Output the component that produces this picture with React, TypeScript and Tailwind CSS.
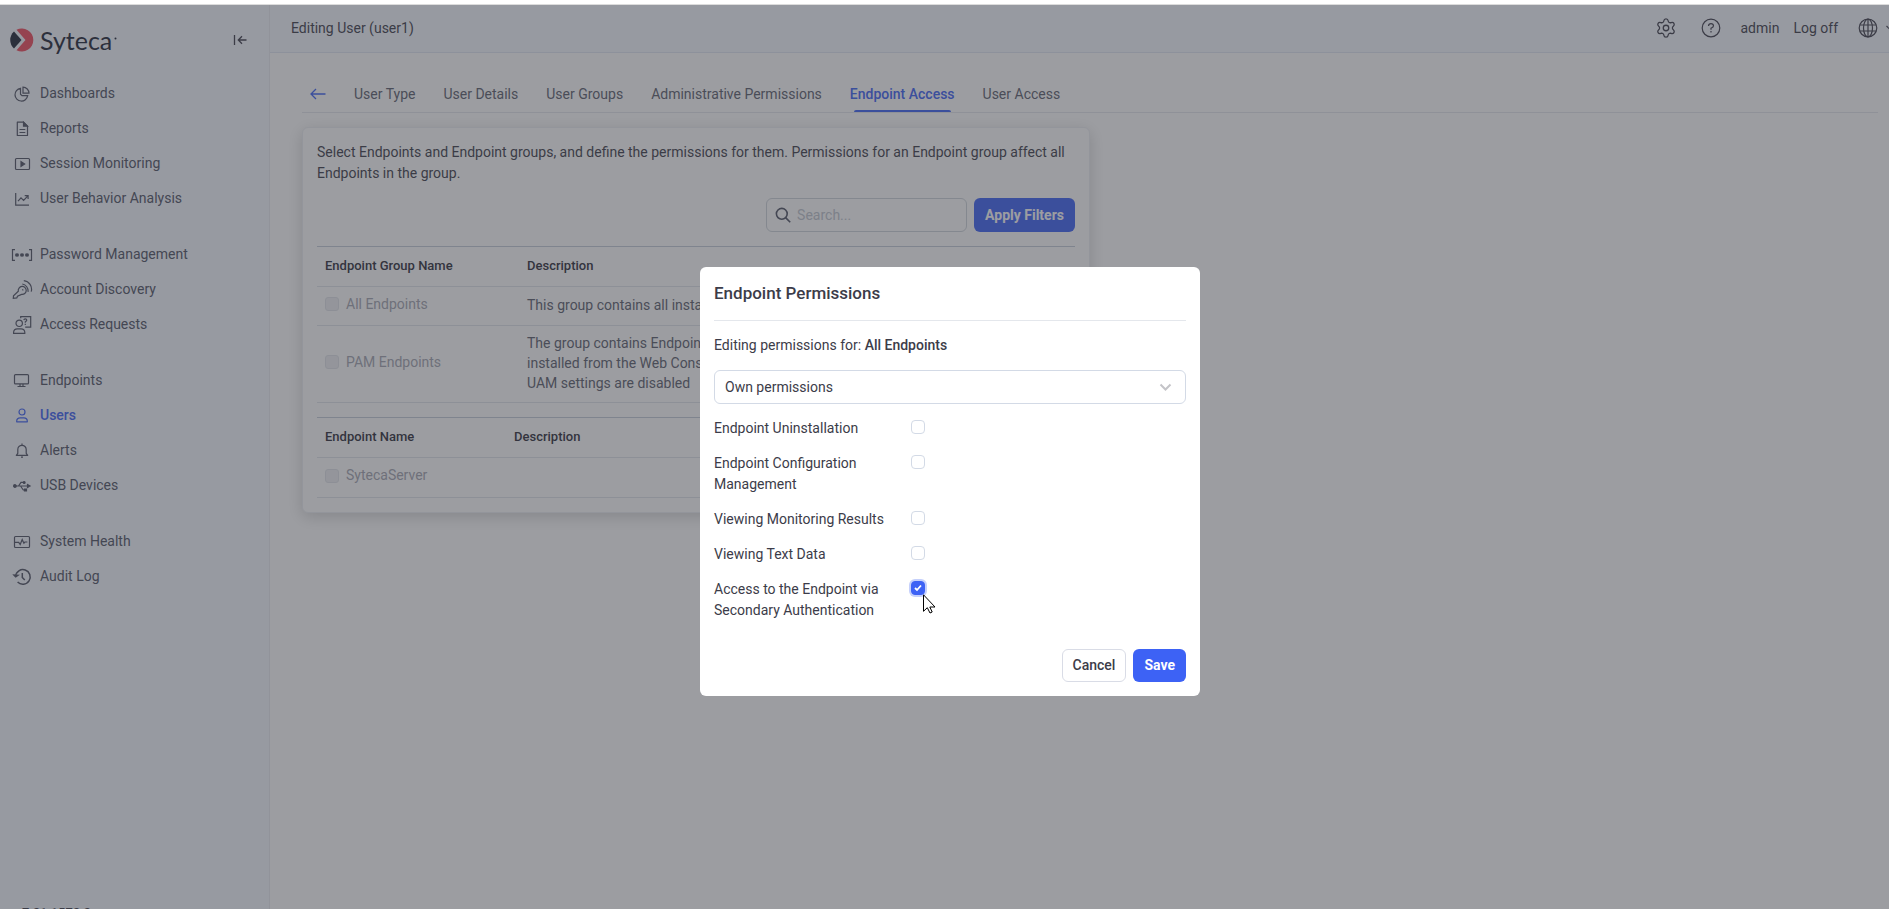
import type { ReactNode } from "react";
import { clsx } from "clsx";
import { Settings } from "lucide-react";

type NavItem = { label: string; icon: ReactNode; active?: boolean };

const navGroups: NavItem[][] = [
  [
    {
      label: "Dashboards",
      icon: (
        <>
          <path d="M9.500 5.300A6.400 6.400 0 1 0 16.700 12.700H11L9.500 11.200z" />
          <path d="M12 4.200v6h6a6 6 0 0 0-6-6z" />
        </>
      ),
    },
    {
      label: "Reports",
      icon: (
        <>
          <path d="M6.300 4.200h6.200l4 4v9.300H6.300z" strokeLinejoin="round" />
          <path d="M12.500 4.200v4h4z" fill="currentColor" />
          <path d="M8.500 11.500h5.800M8.500 14.500h5.800" />
        </>
      ),
    },
    {
      label: "Session Monitoring",
      icon: (
        <>
          <rect x="4.500" y="5.500" width="14" height="11" rx="1" />
          <path d="M10 8.700v4.600l3.600-2.300z" fill="currentColor" />
        </>
      ),
    },
    {
      label: "User Behavior Analysis",
      icon: (
        <>
          <path d="M4.700 5v12.200H18" />
          <path d="M7 13.200l3-3.400 2.600 2.600 4.300-4.600M13.700 7.600h3.400v3.400" />
        </>
      ),
    },
  ],
  [
    {
      label: "Password Management",
      icon: (
        <>
          <path d="M4 5.700H1.500v10.600H4M18 5.700h2.500v10.600H18" />
          <path d="M6 9v4M4.200 10l3.600 2M7.800 10l-3.600 2M11 9v4M9.200 10l3.600 2M12.800 10l-3.600 2M16 9v4M14.200 10l3.600 2M17.800 10l-3.600 2" />
        </>
      ),
    },
    {
      label: "Account Discovery",
      icon: (
        <>
          <path d="M7.300 12.200A4 4 0 1 1 10.600 15.400L6.500 17.200 5.800 18.900 2.300 19.400 2.500 16.700z" />
          <path d="M11.300 10.300l1 1M11.300 5a7 7 0 0 1 5.700 7.800M12.800 1.700a8.600 8.600 0 0 1 7.400 11" />
        </>
      ),
    },
    {
      label: "Access Requests",
      icon: (
        <>
          <circle cx="8.200" cy="9.300" r="3.200" />
          <path d="M2.600 19.300v-1a3.700 3.700 0 0 1 3.700-3.400h3.800a3.700 3.700 0 0 1 3.700 3.400v1z" />
          <path d="M9.700 4.300V2.700h10v10.500h-5.500" />
          <path d="M12.800 6.200q.2-1.300 1.500-1.300t1.500 1.200q0 .9-1.500 1.700v1M14.300 9.800v1.100" />
        </>
      ),
    },
  ],
  [
    {
      label: "Endpoints",
      icon: (
        <>
          <rect x="3.500" y="4.600" width="14" height="9.300" rx="1" />
          <path d="M9 14v2.500M12 14v2.500M6.500 16.500h8" />
        </>
      ),
    },
    {
      label: "Users",
      active: true,
      icon: (
        <>
          <circle cx="11" cy="7" r="3" />
          <path
            d="M5.700 16.800v-.8a3.400 3.400 0 0 1 3.400-3.200h3.800a3.400 3.400 0 0 1 3.400 3.200v.8z"
            strokeLinejoin="round"
          />
        </>
      ),
    },
    {
      label: "Alerts",
      icon: (
        <>
          <path
            d="M11 3.600v1.200M5.300 15.300h11.400l-1.500-2V9.500a4.200 4.200 0 0 0-8.400 0v3.800z"
            strokeLinejoin="round"
          />
          <path d="M10 17.200h2" />
        </>
      ),
    },
    {
      label: "USB Devices",
      icon: (
        <>
          <path d="M3.500 11H18M7.500 11l2.500-3.600h3M9.500 11l2.800 4h2" />
          <circle cx="3.900" cy="11" r="1.300" fill="currentColor" />
          <circle cx="13.200" cy="7.400" r=".9" fill="currentColor" />
          <path d="M13.500 14h2v2h-2zM16.500 9.600v2.800l2.500-1.400z" fill="currentColor" />
        </>
      ),
    },
  ],
  [
    {
      label: "System Health",
      icon: (
        <>
          <rect x="3.500" y="5.500" width="15" height="11" rx="1" />
          <path d="M4 11.300h3.700l1.500 2.200 2-5 1.700 3.700 1-1.200h2.500" />
        </>
      ),
    },
    {
      label: "Audit Log",
      icon: (
        <>
          <path d="M4.600 10.300a7.300 7.300 0 1 1 2 5.700" strokeWidth="1.500" />
          <path d="M2.800 9l1.900 2 2.500-1.800z" fill="currentColor" />
          <path d="M11.300 7v4.500l2.500 2.600" strokeWidth="1.500" />
        </>
      ),
    },
  ],
];

const tabs = [
  "User Type",
  "User Details",
  "User Groups",
  "Administrative Permissions",
  "Endpoint Access",
  "User Access",
];

const permissions = [
  { id: "uninstall", label: "Endpoint Uninstallation" },
  { id: "config", label: "Endpoint Configuration Management" },
  { id: "results", label: "Viewing Monitoring Results" },
  { id: "text", label: "Viewing Text Data" },
  {
    id: "secondary",
    label: "Access to the Endpoint via Secondary Authentication",
    checked: true,
  },
];

function Logo() {
  return (
    <a href="#" aria-label="Syteca" className="flex items-center gap-1.5 text-[#1c2434]">
      <svg width="24" height="24" viewBox="0 0 24 24">
        <path d="M4 3.500L11.500 12 4 20.500A11.500 11.500 0 0 1 4 3.500z" fill="currentColor" />
        <path d="M6.500 1.800A11.500 11.500 0 1 1 6.500 22.200L15.500 12z" fill="#f04a5c" />
      </svg>
      <span className="font-[Lato] text-[25px] leading-8">Syteca</span>
      <svg width="3" height="3" viewBox="0 0 3 3" className="-ml-1 mb-1">
        <circle cx="1.500" cy="1.500" r="1" fill="currentColor" />
      </svg>
    </a>
  );
}

function Sidebar() {
  return (
    <aside className="flex w-[270px] shrink-0 flex-col border-r border-[#e8eaf0] bg-[#f5f8ff]">
      <div className="flex items-center justify-between pt-[19px] pr-[22px] pl-2.5">
        <Logo />
        <button aria-label="Collapse menu" className="text-[#3c3c49]">
          <svg width="14" height="12" viewBox="0 0 14 12" fill="none" stroke="currentColor" strokeWidth="1.300">
            <path d="M1.500 1v10M13.500 6H5.500M9 2.300L5.300 6 9 9.700" />
          </svg>
        </button>
      </div>
      <nav className="flex flex-col gap-[21px] pt-5 pl-[11px]">
        {navGroups.map((group, i) => (
          <ul key={i}>
            {group.map((item) => (
              <li key={item.label}>
                <a
                  href="#"
                  className={clsx(
                    "flex h-[35px] items-center gap-[7px]",
                    item.active ? "font-medium text-[#3d62f5]" : "text-[#4e5263]"
                  )}
                >
                  <svg width="22" height="22" viewBox="0 0 22 22" fill="none" stroke="currentColor" strokeWidth="1.200">
                    {item.icon}
                  </svg>
                  {item.label}
                </a>
              </li>
            ))}
          </ul>
        ))}
      </nav>
      {/* version number, runs past the bottom edge */}
      <div className="mt-auto h-[3px] pl-[22px] text-[13px] leading-[13px] text-[#3c3c49]">
        7.21.1572.2
      </div>
    </aside>
  );
}

function Header() {
  return (
    <header className="flex h-12 shrink-0 items-center justify-between border-b border-[#e1e6f2] bg-[#f5f8ff] pl-[21px] text-[#3c3c49]">
      <h1>Editing User (user1)</h1>
      <div className="flex items-center">
        <button aria-label="Settings" className="mr-6 pb-0.5">
          <Settings size={22} strokeWidth={1.4} />
        </button>
        <button aria-label="Help" className="mr-[19px] pb-0.5">
          <svg width="20" height="20" viewBox="0 0 20 20" fill="none" stroke="currentColor" strokeWidth="1.200">
            <circle cx="10" cy="10" r="8.800" />
            <path d="M7.500 8Q7.700 5.700 10 5.700T12.500 7.800Q12.500 9.200 10 10.200V11.700M10 13v1.500" />
          </svg>
        </button>
        <a href="#" className="mr-3.5">
          admin
        </a>
        <a href="#" className="mr-5">
          Log off
        </a>
        <button aria-label="Language" className="flex items-center gap-2 pb-0.5">
          <svg width="20" height="20" viewBox="0 0 20 20" fill="none" stroke="currentColor" strokeWidth="1.200">
            <circle cx="10" cy="10" r="8.800" />
            <ellipse cx="10" cy="10" rx="4.500" ry="8.800" />
            <path d="M10 1v18M2 7h16M2 13h16" />
          </svg>
          <svg width="3" height="6" viewBox="0 0 3 6" fill="none" stroke="currentColor" strokeWidth="1.200">
            <path d="M.5 1l4 4" />
          </svg>
        </button>
      </div>
    </header>
  );
}

function Tabs() {
  return (
    <div className="flex items-center border-b border-[#e4e7ec] pl-2 text-[#5b5e6d]">
      <a href="#" aria-label="Back" className="mr-7 pb-2 text-[#3d62f5]">
        <svg className="block" width="16" height="12" viewBox="0 0 16 12" fill="none" stroke="currentColor" strokeWidth="1.300">
          <path d="M15.500 6H1M6 1L1 6l5 5" />
        </svg>
      </a>
      <nav className="flex gap-7">
        {tabs.map((tab) => {
          const active = tab === "Endpoint Access";
          return (
            <a
              key={tab}
              href="#"
              className={clsx("flex flex-col", active && "font-medium text-[#3d62f5]")}
            >
              <span className="pb-[5px]">{tab}</span>
              <span className={clsx("mx-1 h-0.5 rounded-t", active && "bg-[#3d62f5]")} />
            </a>
          );
        })}
      </nav>
    </div>
  );
}

function DisabledOption({ label }: { label: string }) {
  return (
    <label className="flex items-center gap-[7px] pb-0.5 text-[#a3a5b0]">
      <input
        type="checkbox"
        disabled
        className="size-3.5 appearance-none rounded-[3px] border border-[#e1e3e8] bg-[#eeeff2]"
      />
      {label}
    </label>
  );
}

function EndpointPanel() {
  return (
    <section className="mt-3.5 w-[788px] rounded-md border border-[#eceef2] bg-white p-3.5 shadow-[0_4px_16px_rgba(0,0,0,0.18)]">
      <p className="leading-[21px] text-[#3c3c49]">
        Select Endpoints and Endpoint groups, and define the permissions for them. Permissions for
        an Endpoint group affect all Endpoints in the group.
      </p>
      <div className="mt-3.5 flex justify-end gap-[7px]">
        <div className="flex h-[34px] w-[201px] items-center gap-1.5 rounded-md border border-[#ced4da] px-2">
          <svg width="16" height="16" viewBox="0 0 16 16" fill="none" stroke="#4e5263" strokeWidth="1.600">
            <circle cx="6.800" cy="6.800" r="5.400" />
            <path d="M10.600 10.600l4.600 4.600" />
          </svg>
          <input
            aria-label="Search"
            placeholder="Search..."
            className="min-w-0 flex-1 outline-none placeholder:text-[#c0c5ce]"
          />
        </div>
        <button className="h-[34px] rounded-md bg-[#3d62f5] px-[11px] font-bold text-white">
          Apply Filters
        </button>
      </div>

      <table className="mt-3.5 w-full table-fixed border-t border-[#c5ccd8] text-left">
        <thead>
          <tr className="h-10 border-b border-[#e1e4ea] text-[13px] text-[#2c2c38]">
            <th className="w-[202px] pb-0.5 pl-2 font-medium">Endpoint Group Name</th>
            <th className="pb-0.5 pl-2 font-medium">Description</th>
          </tr>
        </thead>
        <tbody className="text-[#5b5e6d]">
          <tr className="h-[39px] border-b border-[#e1e4ea]">
            <td className="pb-0.5 pl-2">
              <DisabledOption label="All Endpoints" />
            </td>
            <td className="pb-0.5 pl-2">This group contains all installed Endpoints.</td>
          </tr>
          <tr className="h-[77px] border-b border-[#e1e4ea]">
            <td className="pb-0.5 pl-2">
              <DisabledOption label="PAM Endpoints" />
            </td>
            <td className="pb-0.5 pl-2 leading-5">
              The group contains Endpoints
              <br />
              installed from the Web Console.
              <br />
              UAM settings are disabled
            </td>
          </tr>
        </tbody>
      </table>

      <table className="mt-3.5 w-full table-fixed border-t border-[#c5ccd8] text-left">
        <thead>
          <tr className="h-10 border-b border-[#e1e4ea] text-[13px] text-[#2c2c38]">
            <th className="w-[189px] pb-0.5 pl-2 font-medium">Endpoint Name</th>
            <th className="pb-0.5 pl-2 font-medium">Description</th>
          </tr>
        </thead>
        <tbody>
          <tr className="h-10 border-b border-[#e1e4ea]">
            <td className="pb-0.5 pl-2">
              <DisabledOption label="SytecaServer" />
            </td>
            <td />
          </tr>
        </tbody>
      </table>
    </section>
  );
}

function PermissionsDialog() {
  return (
    <div
      role="dialog"
      aria-labelledby="dialog-title"
      className="w-[500px] rounded-md bg-white px-3.5 pb-3.5 text-[#3c3c49]"
    >
      <h2
        id="dialog-title"
        className="border-b border-[#e4e7ec] py-3.5 text-[17px] leading-[25px] font-medium"
      >
        Endpoint Permissions
      </h2>
      <p className="mt-3.5 leading-[21px]">
        Editing permissions for: <b className="font-medium">All Endpoints</b>
      </p>
      <div className="relative mt-3.5">
        <select
          aria-label="Permissions type"
          className="h-[34px] w-full appearance-none rounded-md border border-[#d3dae6] bg-white px-2.5"
        >
          <option>Own permissions</option>
        </select>
        <svg
          className="pointer-events-none absolute top-[13px] right-3.5"
          width="13"
          height="9"
          viewBox="0 0 13 9"
          fill="none"
          stroke="#c4c4c8"
          strokeWidth="2"
        >
          <path d="M1.500 1.500l5 5 5-5" />
        </svg>
      </div>
      <div className="mt-3.5 flex flex-col gap-3.5">
        {permissions.map((p) => (
          <div key={p.id} className="flex items-start">
            <label htmlFor={p.id} className="w-[197px] pr-4 leading-[21px]">
              {p.label}
            </label>
            <span className="relative mt-0.5 flex">
              <input
                id={p.id}
                type="checkbox"
                defaultChecked={p.checked}
                className="size-3.5 appearance-none rounded-[4px] border border-[#d3dae6] checked:border-[#3d62f5] checked:bg-[#3d62f5] checked:ring-2 checked:ring-[#c5d0fb]"
              />
              {p.checked && (
                <>
                  <svg
                    className="pointer-events-none absolute top-[3px] left-[3px]"
                    width="8"
                    height="8"
                    viewBox="0 0 8 8"
                    fill="none"
                    stroke="#fff"
                    strokeWidth="1.800"
                  >
                    <path d="M1 4l2 2 4-4.500" />
                  </svg>
                  <svg
                    className="pointer-events-none absolute top-[13px] left-3"
                    width="13"
                    height="20"
                    viewBox="0 0 13 20"
                  >
                    <path d="M.5.800v16.500l3.800-3.600 2.700 5.300 2.200-1-2.400-5h5.200z" fill="#fff" stroke="#000" />
                  </svg>
                </>
              )}
            </span>
          </div>
        ))}
      </div>
      <div className="mt-7 flex justify-end gap-[7px]">
        <button className="h-[33px] rounded-md border border-[#d9dce6] px-2.5 font-medium">
          Cancel
        </button>
        <button className="h-[33px] rounded-md bg-[#3d62f5] px-[11px] font-bold text-white">
          Save
        </button>
      </div>
    </div>
  );
}

export default function App() {
  return (
    <div className="flex h-screen flex-col overflow-hidden bg-white font-[Roboto,sans-serif] text-[14px]">
      <div className="h-[5px] shrink-0 border-b border-[#dcdcdc]" />
      <div className="relative flex min-h-0 flex-1">
        <Sidebar />
        <div className="flex min-w-0 flex-1 flex-col">
          <Header />
          <main className="pt-[31px] pr-[11px] pl-8">
            <Tabs />
            <EndpointPanel />
          </main>
        </div>
        <div className="absolute inset-0 flex items-start justify-center bg-[#393b43]/50 pt-[262px] pl-[11px]">
          <PermissionsDialog />
        </div>
      </div>
    </div>
  );
}
